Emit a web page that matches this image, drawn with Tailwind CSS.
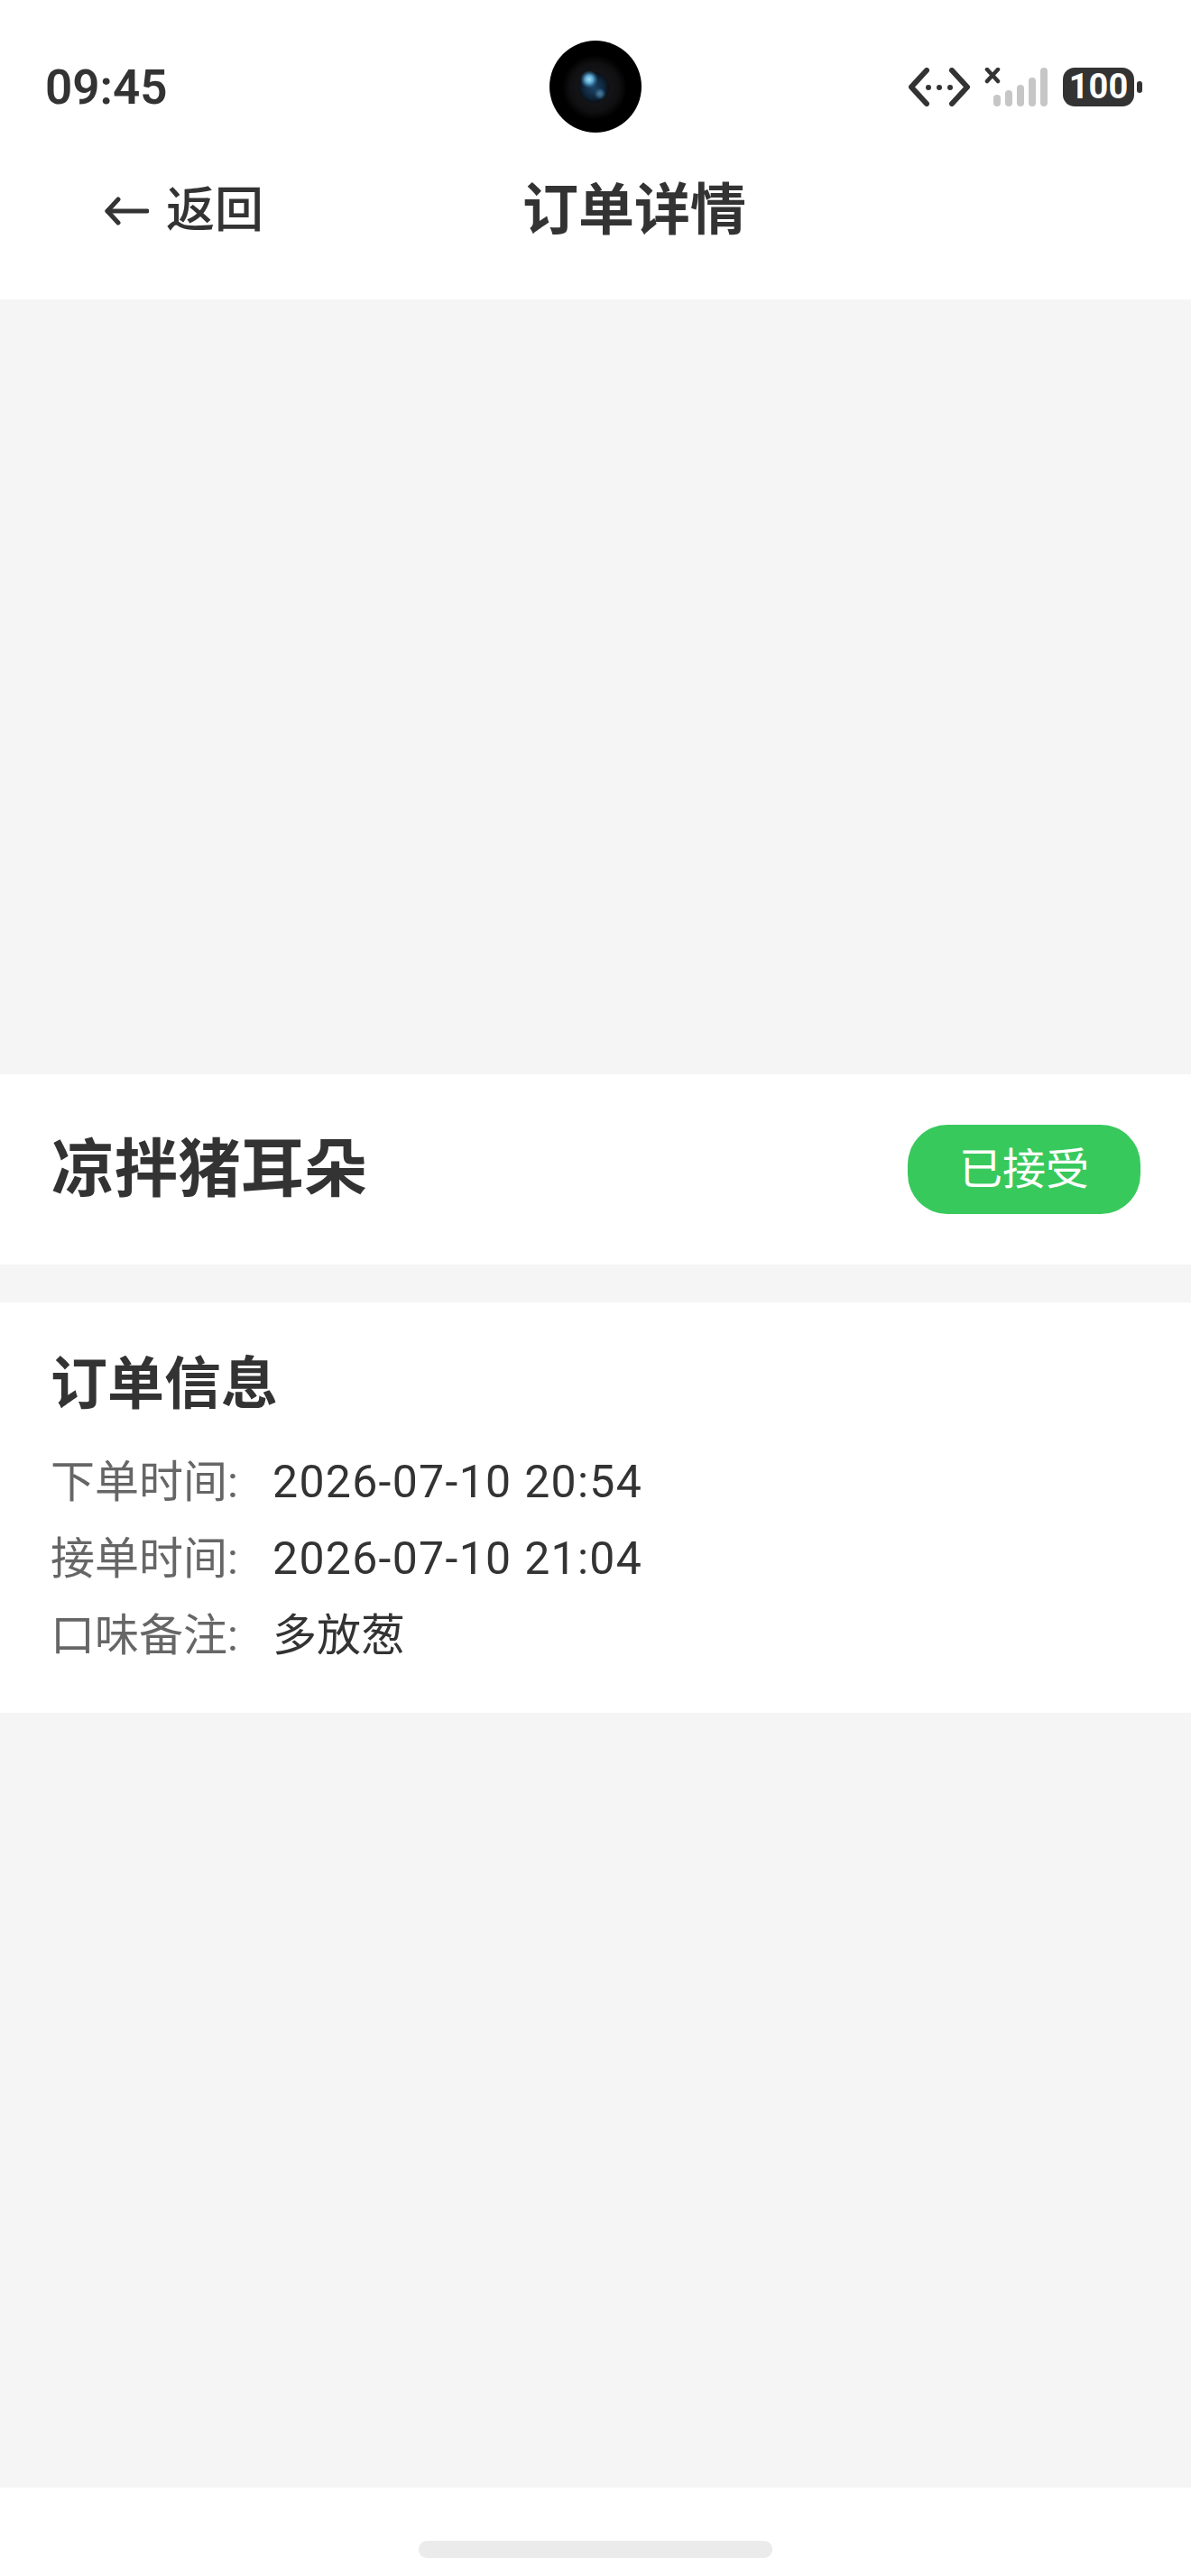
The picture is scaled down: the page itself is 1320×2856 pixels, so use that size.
<!DOCTYPE html>
<html lang="zh-CN">
<head>
  <meta charset="UTF-8" />
  <meta name="viewport" content="width=device-width, initial-scale=1.0" />
  <title>订单详情</title>
  <script src="https://cdn.jsdelivr.net/npm/@tailwindcss/browser@4"></script>
</head>
<body class="bg-[#f5f5f5] h-[2856px] w-[1320px] overflow-hidden flex flex-col font-['Roboto','Noto_Sans_CJK_SC',sans-serif] text-[#333333]">

  <!-- status bar + nav -->
  <header class="relative bg-white h-[332px] shrink-0">
    <div class="flex justify-between items-center h-[192px] pl-[50px] pr-[54px]">
      <span class="text-[53px] font-semibold leading-none mt-[2px]">09:45</span>

      <div class="flex items-start h-[43px]">
        <svg class="w-[68px] h-[43px]" viewBox="0 0 68 43" fill="none" stroke="#333" stroke-width="6" stroke-linecap="round" stroke-linejoin="round">
          <path d="M20 3 3 21.500 20 40" />
          <path d="M48 3 65 21.500 48 40" />
          <circle cx="22" cy="22" r="3" fill="#333" stroke="none" />
          <circle cx="34" cy="22" r="3" fill="#333" stroke="none" />
          <circle cx="46" cy="22" r="3" fill="#333" stroke="none" />
        </svg>
        <svg class="ml-[16px] w-[70px] h-[43px]" viewBox="0 0 70 43" fill="none">
          <path d="M3 2 15 15M15 2 3 15" stroke="#333" stroke-width="4.500" stroke-linecap="round" />
          <g fill="#c6c6c6">
            <rect x="10" y="30" width="8" height="13" rx="4" />
            <rect x="23" y="25" width="8" height="18" rx="4" />
            <rect x="36" y="19" width="8" height="24" rx="4" />
            <rect x="49" y="11" width="8" height="32" rx="4" />
            <rect x="62" y="0" width="8" height="43" rx="4" />
          </g>
        </svg>
        <div class="ml-[17px] w-[79px] h-[43px] rounded-[13px] bg-[#333333] text-white text-[38px] font-bold leading-[43px] text-center">100</div>
        <div class="ml-[3px] mt-[15px] w-[6px] h-[13px] rounded-[3px] bg-[#333333]"></div>
      </div>
    </div>

    <!-- punch-hole camera -->
    <svg class="absolute left-[609px] top-[45px] w-[102px] h-[102px]" viewBox="0 0 102 102">
      <defs>
        <radialGradient id="ring">
          <stop offset="0" stop-color="#1c1c1e" />
          <stop offset="0.75" stop-color="#101012" />
          <stop offset="1" stop-color="#000" />
        </radialGradient>
        <radialGradient id="lens">
          <stop offset="0" stop-color="#1d4468" />
          <stop offset="0.7" stop-color="#0f2438" />
          <stop offset="1" stop-color="#0a0f16" />
        </radialGradient>
        <radialGradient id="glint">
          <stop offset="0" stop-color="#a5e0f7" />
          <stop offset="0.45" stop-color="#5aa5cf" />
          <stop offset="1" stop-color="#2e7099" stop-opacity="0" />
        </radialGradient>
      </defs>
      <circle cx="51" cy="51" r="51" fill="#000" />
      <circle cx="50" cy="52" r="36" fill="url(#ring)" />
      <circle cx="49" cy="52" r="17" fill="url(#lens)" />
      <circle cx="44" cy="43" r="10" fill="url(#glint)" />
      <circle cx="56" cy="59" r="7" fill="url(#glint)" opacity="0.45" />
    </svg>

    <nav class="flex items-center h-[84px] pl-[116px]">
      <a class="flex items-center w-[463px] text-[54px] font-medium leading-none">
        <svg class="w-[49px] h-[32px] mr-[19px]" viewBox="0 0 49 32" fill="none" stroke="#333" stroke-width="5" stroke-linecap="round" stroke-linejoin="round">
          <path d="M15 3 3 16 15 29" />
          <path d="M3 16H47" />
        </svg>
        返回
      </a>
      <h1 class="text-[62px] font-bold leading-none">订单详情</h1>
    </nav>
  </header>

  <!-- image placeholder -->
  <div class="h-[859px] shrink-0"></div>

  <section class="bg-white h-[211px] shrink-0 flex justify-between items-center pl-[57px] pr-[56px]">
    <h2 class="text-[70px] font-bold leading-none">凉拌猪耳朵</h2>
    <span class="w-[258px] h-[99px] rounded-[44px] bg-[#38c95c] text-white text-[48px] leading-[99px] text-center">已接受</span>
  </section>

  <section class="bg-white h-[455px] shrink-0 mt-[42px] pl-[56px] pt-[55px]">
    <h3 class="text-[63px] font-bold leading-[72px]">订单信息</h3>
    <div class="mt-[30px] flex flex-col text-[49px] leading-[85px]">
      <div class="flex"><span class="w-[246px] text-[#666666]">下单时间:</span><span class="text-[50px] tracking-[1.3px]">2026-07-10 20:54</span></div>
      <div class="flex"><span class="w-[246px] text-[#666666]">接单时间:</span><span class="text-[50px] tracking-[1.3px]">2026-07-10 21:04</span></div>
      <div class="flex"><span class="w-[246px] text-[#666666]">口味备注:</span><span>多放葱</span></div>
    </div>
  </section>

  <div class="flex-1"></div>

  <!-- home indicator -->
  <footer class="bg-white h-[98px] shrink-0 pt-[59px]">
    <div class="mx-auto w-[392px] h-[19px] rounded-[9px] bg-[#ebebeb]"></div>
  </footer>

</body>
</html>
